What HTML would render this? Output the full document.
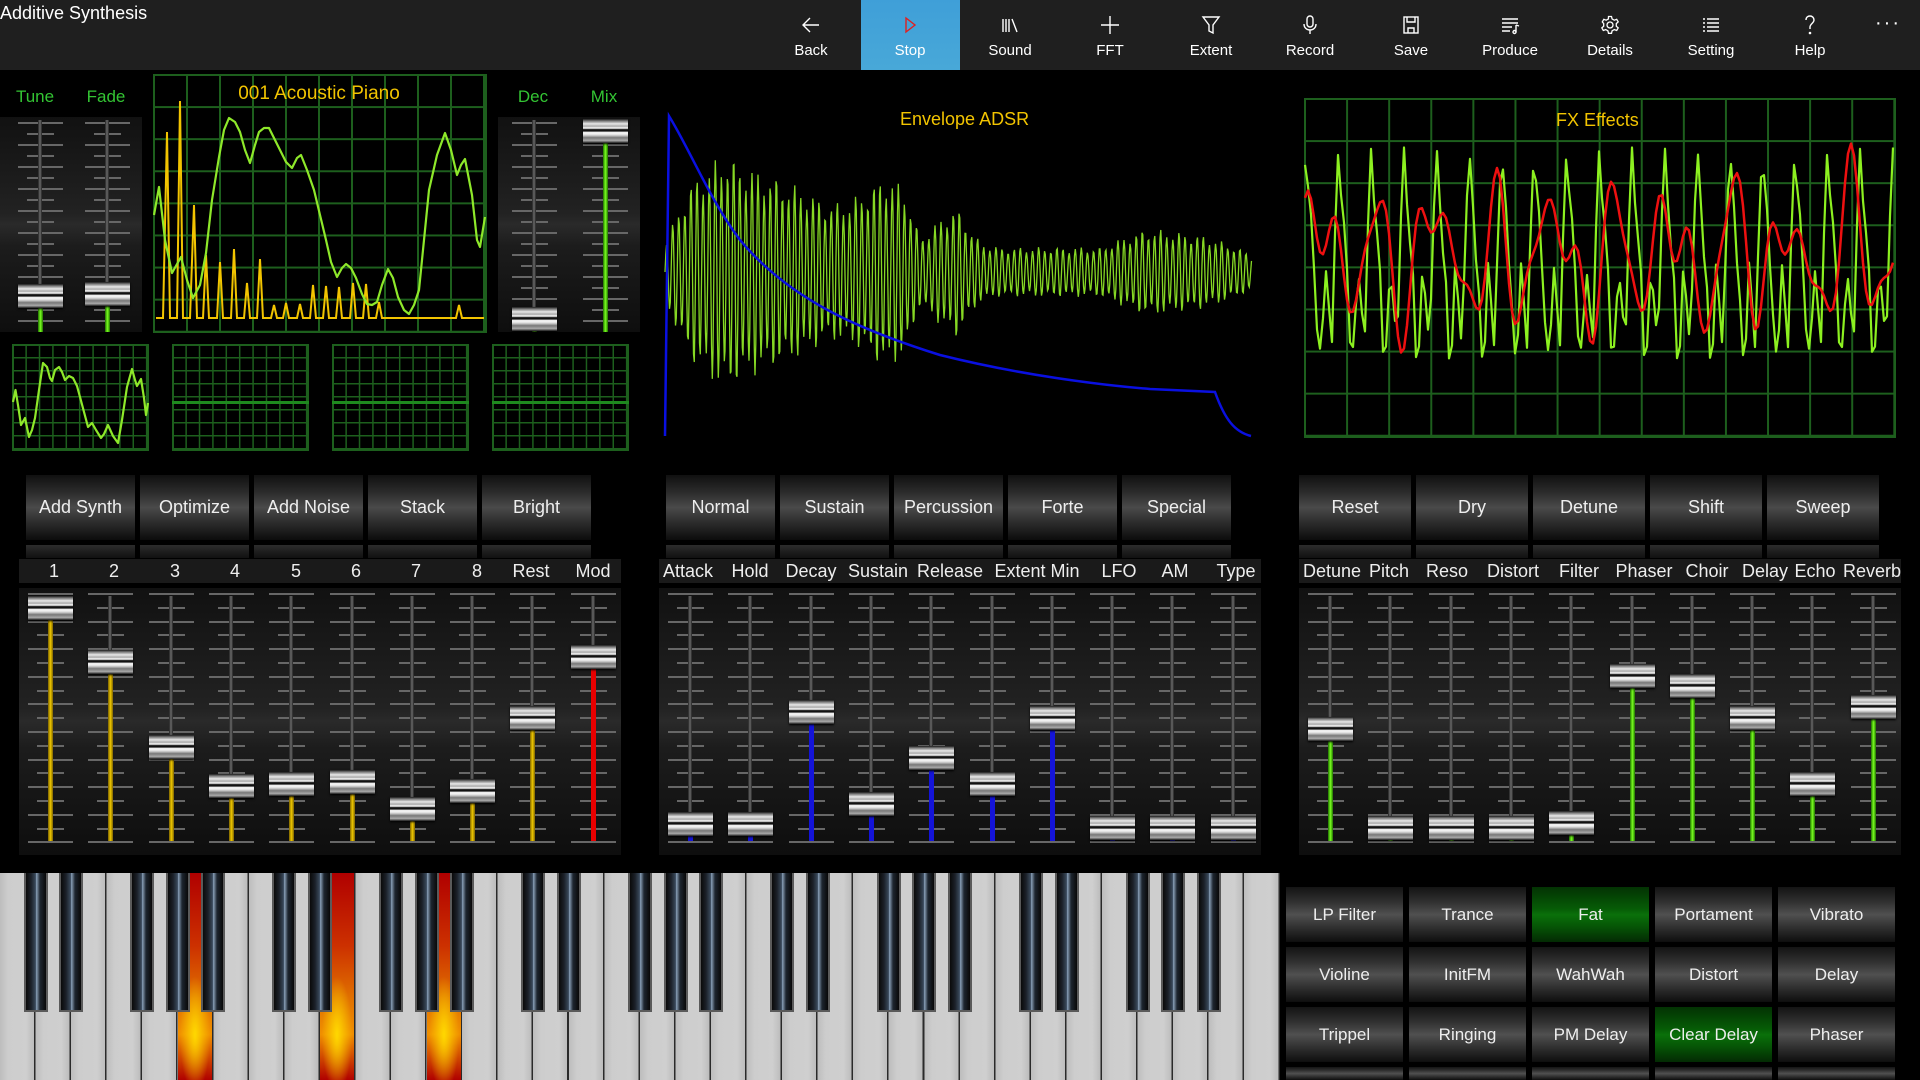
<!DOCTYPE html>
<html><head><meta charset="utf-8">
<style>
*{margin:0;padding:0;box-sizing:border-box}
body{width:1920px;height:1080px;background:#000;overflow:hidden;position:relative;font-family:"Liberation Sans",sans-serif;color:#fff}
.a{position:absolute}
#top{left:0;top:0;width:1920px;height:70px;background:#1f1f1f}
.ti{position:absolute;top:0;width:100px;height:70px;text-align:center;font-size:15px}
.ti svg{position:absolute;left:40px;top:14px}
.ti span{position:absolute;left:0;right:0;top:42px}
.btn{position:absolute;height:65px;background:linear-gradient(180deg,#101010 0%,#2a2a2a 25%,#4a4a4a 50%,#2a2a2a 75%,#0c0c0c 100%);font-size:18px;display:flex;align-items:center;justify-content:center;color:#eee}
.ref{position:absolute;height:13px;top:545px;background:linear-gradient(180deg,#2c2c2c,#111)}
.lbl{position:absolute;top:559px;height:24px;background:#1a1a1a}
.lt{position:absolute;top:559px;font-size:18px;transform:translateX(-50%);white-space:nowrap;color:#eee;line-height:24px}
.panel{position:absolute;background:linear-gradient(180deg,#111 0%,#222 45%,#2a2a2a 50%,#1c1c1c 60%,#0e0e0e 100%)}
.grid{position:absolute;border:2px solid #1d5f1d;background-color:#000}
.bb{position:absolute;width:117px;height:55px;font-size:17px;display:flex;align-items:center;justify-content:center;color:#eee;background:linear-gradient(180deg,#141414 0%,#2e2e2e 25%,#505050 50%,#2e2e2e 75%,#0e0e0e 100%)}
.bb.g{background:linear-gradient(180deg,#033203 0%,#065c06 40%,#0a700a 50%,#065806 70%,#032a03 100%)}
.gl{font-size:17px;color:#33c433;position:absolute;transform:translateX(-50%)}
</style></head><body>
<div id="top" class="a"></div>
<div class="a" style="left:0;top:3px;font-size:18px;color:#fff">Additive Synthesis</div>
<div class="a" style="left:861px;top:0;width:99px;height:70px;background:linear-gradient(180deg,#3f9fd8,#48a8d8)"></div>

<div class="ti" style="left:761px"><svg width="20" height="22" viewBox="0 0 20 22" fill="none" stroke="#fff" stroke-width="1.4"><path d="M18 11H2M9 4L2 11l7 7"/></svg><span>Back</span></div>
<div class="ti" style="left:860px"><svg width="20" height="22" viewBox="0 0 20 22" fill="none" stroke="#e02020" stroke-width="1.4"><path d="M6 4l9 7-9 7z"/></svg><span>Stop</span></div>
<div class="ti" style="left:960px"><svg width="20" height="22" viewBox="0 0 20 22" fill="none" stroke="#fff" stroke-width="1.4"><path d="M3 5v13M6 5v13M9 5v13M12 5l5 13"/></svg><span>Sound</span></div>
<div class="ti" style="left:1060px"><svg width="20" height="22" viewBox="0 0 20 22" fill="none" stroke="#fff" stroke-width="1.4"><path d="M10 2v18M1 11h18"/></svg><span>FFT</span></div>
<div class="ti" style="left:1161px"><svg width="20" height="22" viewBox="0 0 20 22" fill="none" stroke="#fff" stroke-width="1.4"><path d="M2 3h16l-6 8v8l-4-2v-6z"/></svg><span>Extent</span></div>
<div class="ti" style="left:1260px"><svg width="20" height="22" viewBox="0 0 20 22" fill="none" stroke="#fff" stroke-width="1.4"><rect x="7" y="2" width="6" height="11" rx="3"/><path d="M4 10c0 4 3 6 6 6s6-2 6-6M10 16v4"/></svg><span>Record</span></div>
<div class="ti" style="left:1361px"><svg width="20" height="22" viewBox="0 0 20 22" fill="none" stroke="#fff" stroke-width="1.4"><rect x="3" y="3" width="14" height="16"/><path d="M6 3v5h8V3M7 19v-5h6v5"/></svg><span>Save</span></div>
<div class="ti" style="left:1460px"><svg width="20" height="22" viewBox="0 0 20 22" fill="none" stroke="#fff" stroke-width="1.4"><path d="M2 5h16M2 9h16M2 13h10M2 17h8M16 11v7M16 11l3 1"/><circle cx="14.5" cy="18" r="1.5"/></svg><span>Produce</span></div>
<div class="ti" style="left:1560px"><svg width="20" height="22" viewBox="0 0 20 22" fill="none" stroke="#fff" stroke-width="1.3"><circle cx="10" cy="11" r="3"/><path d="M8.5 2.5h3l.6 2.5 2.2 1.2 2.4-.9 1.5 2.6-1.9 1.7v2.6l1.9 1.7-1.5 2.6-2.4-.9-2.2 1.2-.6 2.5h-3l-.6-2.5-2.2-1.2-2.4.9-1.5-2.6 1.9-1.7V9.6L2.3 7.9l1.5-2.6 2.4.9L8.4 5z"/></svg><span>Details</span></div>
<div class="ti" style="left:1661px"><svg width="20" height="22" viewBox="0 0 20 22" fill="none" stroke="#fff" stroke-width="1.4"><path d="M2 5h2M2 9h2M2 13h2M2 17h2M6 5h12M6 9h12M6 13h12M6 17h12"/></svg><span>Setting</span></div>
<div class="ti" style="left:1760px"><svg width="20" height="22" viewBox="0 0 20 22" fill="none" stroke="#fff" stroke-width="1.4"><path d="M6 6c0-3 2-4 4-4s4 1.5 4 4c0 3-4 4-4 7v2"/><circle cx="10" cy="19" r=".6" fill="#fff"/></svg><span>Help</span></div>
<div class="a" style="left:1875px;top:12px;font-size:20px;letter-spacing:2px">···</div>

<div class="panel" style="left:0;top:117px;width:142px;height:215px"></div>
<div class="panel" style="left:498px;top:117px;width:142px;height:215px"></div>
<div class="gl" style="left:35px;top:87px">Tune</div>
<div class="gl" style="left:106px;top:87px">Fade</div>
<div class="gl" style="left:533px;top:87px">Dec</div>
<div class="gl" style="left:604px;top:87px">Mix</div>

<div class="grid" style="left:153px;top:74px;width:334px;height:259px;background-image:linear-gradient(#1d5f1d 2px,transparent 2px),linear-gradient(90deg,#1d5f1d 2px,transparent 2px);background-size:33px 32.1px;background-position:-2px -2px"></div>
<svg class="a" style="left:0;top:0" width="640" height="460" viewBox="0 0 640 460">
<path fill="none" stroke="#f2c400" stroke-width="2" d="M156 318 L163 318 L167 132 L170 318 L177 318 L180 101 L183 318 L190 318 L194 205 L197 318 L203 318 L206 255 L209 318 L217 318 L220 262 L223 318 L231 318 L234 249 L237 318 L244 318 L247 283 L250 318 L257 318 L260 259 L263 318 L271 318 L274 305 L277 318 L283 318 L286 303 L289 318 L297 318 L300 304 L303 318 L310 318 L313 285 L316 318 L323 318 L326 286 L329 318 L336 318 L339 287 L342 318 L350 318 L353 283 L356 318 L363 318 L366 284 L369 318 L376 318 L379 302 L382 318 L456 318 L459 305 L462 318 L484 318"/>
<polyline fill="none" stroke="#8ee82a" stroke-width="2.2" stroke-linejoin="round" points="154,215 159,187 165,240 172,273 181,257 187,280 193,298 200,285 206,253 212,200 219,157 224,130 229,118 235,122 240,132 245,150 250,163 255,145 259,132 264,128 269,128 274,138 280,150 286,162 292,168 297,158 301,155 307,170 314,190 320,215 326,240 331,262 337,277 342,268 346,264 351,268 356,278 362,294 367,304 372,305 377,302 382,285 388,269 393,278 398,297 404,310 409,314 414,305 419,290 424,240 429,190 437,155 445,133 451,150 457,175 461,165 465,159 472,195 477,240 480,247 485,217"/>
</svg>
<div class="a" style="left:319px;top:83px;transform:translateX(-50%);font-size:19px;color:#f2c400;white-space:nowrap">001 Acoustic Piano</div>

<div class="grid" style="left:12px;top:344px;width:137px;height:107px;background-image:linear-gradient(#1d5f1d 1.5px,transparent 1.5px),linear-gradient(90deg,#1d5f1d 1.5px,transparent 1.5px);background-size:13.4px 13px;background-position:-2px -2px"></div>
<div class="grid" style="left:172px;top:344px;width:137px;height:107px;background-image:linear-gradient(#1d5f1d 1.5px,transparent 1.5px),linear-gradient(90deg,#1d5f1d 1.5px,transparent 1.5px);background-size:13.4px 13px;background-position:-2px -2px"></div>
<div class="grid" style="left:332px;top:344px;width:137px;height:107px;background-image:linear-gradient(#1d5f1d 1.5px,transparent 1.5px),linear-gradient(90deg,#1d5f1d 1.5px,transparent 1.5px);background-size:13.4px 13px;background-position:-2px -2px"></div>
<div class="grid" style="left:492px;top:344px;width:137px;height:107px;background-image:linear-gradient(#1d5f1d 1.5px,transparent 1.5px),linear-gradient(90deg,#1d5f1d 1.5px,transparent 1.5px);background-size:13.4px 13px;background-position:-2px -2px"></div>
<div class="a" style="left:172px;top:401px;width:137px;height:3px;background:#1e8a1e"></div>
<div class="a" style="left:332px;top:401px;width:137px;height:3px;background:#1e8a1e"></div>
<div class="a" style="left:492px;top:401px;width:137px;height:3px;background:#1e8a1e"></div>
<svg class="a" style="left:0;top:0" width="160" height="460">
<polyline fill="none" stroke="#8ee82a" stroke-width="2.2" stroke-linejoin="round" points="13,402 15.5,390 18,405 21,425 25,418 29,437 32,430 35,418 39,390 43,363 47,367 50,378 52,381 55,370 59,367 62,372 65,380 69,376 73,378 77,386 80,397 84,412 88,427 92,423 96,430 101,438 104,434 108,425 113,436 118,443 122,420 127,387 132,369 135,380 137,386 141,379 144,398 146,415 148,403"/>
</svg>

<div class="a" style="left:900px;top:109px;font-size:18px;color:#f2c400">Envelope ADSR</div>
<svg class="a" style="left:0;top:0" width="1280" height="460">
<path id="envg" fill="none" stroke="#86d824" stroke-width="1.3"/>
<path fill="none" stroke="#0a10e0" stroke-width="2.5" d="M665 436 L669 116 C690 150 710 200 740 240 C790 300 860 330 940 355 C1020 375 1100 385 1150 389 L1215 392 C1225 420 1235 432 1251 436"/>
</svg>

<div class="grid" style="left:1304px;top:98px;width:592px;height:340px;background-image:linear-gradient(#1d5f1d 2px,transparent 2px),linear-gradient(90deg,#1d5f1d 2px,transparent 2px);background-size:42.1px 42.1px;background-position:-2px -2px"></div>
<div class="a" style="left:1556px;top:110px;font-size:18px;color:#f2c400">FX Effects</div>
<svg class="a" style="left:0;top:0" width="1920" height="460">
<path id="fxg" fill="none" stroke="#8cf020" stroke-width="2.2" stroke-linejoin="round"/>
<path id="fxr" fill="none" stroke="#ee1010" stroke-width="2.5" stroke-linejoin="round"/>
</svg>

<div class="btn" style="left:26px;top:475px;width:109px">Add Synth</div>
<div class="btn" style="left:140px;top:475px;width:109px">Optimize</div>
<div class="btn" style="left:254px;top:475px;width:109px">Add Noise</div>
<div class="btn" style="left:368px;top:475px;width:109px">Stack</div>
<div class="btn" style="left:482px;top:475px;width:109px">Bright</div>
<div class="ref" style="left:26px;width:109px"></div><div class="ref" style="left:140px;width:109px"></div><div class="ref" style="left:254px;width:109px"></div><div class="ref" style="left:368px;width:109px"></div><div class="ref" style="left:482px;width:109px"></div>
<div class="btn" style="left:666px;top:475px;width:109px">Normal</div>
<div class="btn" style="left:780px;top:475px;width:109px">Sustain</div>
<div class="btn" style="left:894px;top:475px;width:109px">Percussion</div>
<div class="btn" style="left:1008px;top:475px;width:109px">Forte</div>
<div class="btn" style="left:1122px;top:475px;width:109px">Special</div>
<div class="ref" style="left:666px;width:109px"></div><div class="ref" style="left:780px;width:109px"></div><div class="ref" style="left:894px;width:109px"></div><div class="ref" style="left:1008px;width:109px"></div><div class="ref" style="left:1122px;width:109px"></div>
<div class="btn" style="left:1299px;top:475px;width:112px">Reset</div>
<div class="btn" style="left:1416px;top:475px;width:112px">Dry</div>
<div class="btn" style="left:1533px;top:475px;width:112px">Detune</div>
<div class="btn" style="left:1650px;top:475px;width:112px">Shift</div>
<div class="btn" style="left:1767px;top:475px;width:112px">Sweep</div>
<div class="ref" style="left:1299px;width:112px"></div><div class="ref" style="left:1416px;width:112px"></div><div class="ref" style="left:1533px;width:112px"></div><div class="ref" style="left:1650px;width:112px"></div><div class="ref" style="left:1767px;width:112px"></div>

<div class="lbl" style="left:19px;width:602px"></div>
<div class="lbl" style="left:659px;width:602px"></div>
<div class="lbl" style="left:1299px;width:602px"></div>
<div class="lt" style="left:54px">1</div><div class="lt" style="left:114px">2</div><div class="lt" style="left:175px">3</div><div class="lt" style="left:235px">4</div><div class="lt" style="left:296px">5</div><div class="lt" style="left:356px">6</div><div class="lt" style="left:416px">7</div><div class="lt" style="left:477px">8</div><div class="lt" style="left:531px">Rest</div><div class="lt" style="left:593px">Mod</div>
<div class="lt" style="left:688px">Attack</div><div class="lt" style="left:750px">Hold</div><div class="lt" style="left:811px">Decay</div><div class="lt" style="left:878px">Sustain</div><div class="lt" style="left:950px">Release</div><div class="lt" style="left:1037px">Extent Min</div><div class="lt" style="left:1119px">LFO</div><div class="lt" style="left:1175px">AM</div><div class="lt" style="left:1236px">Type</div>
<div class="lt" style="left:1332px">Detune</div><div class="lt" style="left:1389px">Pitch</div><div class="lt" style="left:1447px">Reso</div><div class="lt" style="left:1513px">Distort</div><div class="lt" style="left:1579px">Filter</div><div class="lt" style="left:1644px">Phaser</div><div class="lt" style="left:1707px">Choir</div><div class="lt" style="left:1765px">Delay</div><div class="lt" style="left:1815px">Echo</div><div class="lt" style="left:1872px">Reverb</div>

<div class="panel" style="left:19px;top:588px;width:602px;height:267px"></div>
<div class="panel" style="left:659px;top:588px;width:602px;height:267px"></div>
<div class="panel" style="left:1299px;top:588px;width:602px;height:267px"></div>

<div id="F" class="a" style="left:0;top:0;width:1920px;height:1080px"></div>

<div id="P" class="a" style="left:0;top:873px;width:1280px;height:207px;background:repeating-linear-gradient(90deg,#bdbdbd 0,#cdcdcd 8px,#cfcfcf 26px,#bcbcbc 34px,#2a2a2a 34px,#2a2a2a 35.55px);overflow:hidden"></div>

<div class="bb" style="left:1286px;top:887px">LP Filter</div><div class="bb" style="left:1409px;top:887px">Trance</div><div class="bb g" style="left:1532px;top:887px">Fat</div><div class="bb" style="left:1655px;top:887px">Portament</div><div class="bb" style="left:1778px;top:887px">Vibrato</div>
<div class="bb" style="left:1286px;top:947px">Violine</div><div class="bb" style="left:1409px;top:947px">InitFM</div><div class="bb" style="left:1532px;top:947px">WahWah</div><div class="bb" style="left:1655px;top:947px">Distort</div><div class="bb" style="left:1778px;top:947px">Delay</div>
<div class="bb" style="left:1286px;top:1007px">Trippel</div><div class="bb" style="left:1409px;top:1007px">Ringing</div><div class="bb" style="left:1532px;top:1007px">PM Delay</div><div class="bb g" style="left:1655px;top:1007px">Clear Delay</div><div class="bb" style="left:1778px;top:1007px">Phaser</div>
<div class="bb" style="left:1286px;top:1067px;height:13px"></div><div class="bb" style="left:1409px;top:1067px;height:13px"></div><div class="bb" style="left:1532px;top:1067px;height:13px"></div><div class="bb" style="left:1655px;top:1067px;height:13px"></div><div class="bb" style="left:1778px;top:1067px;height:13px"></div>

<script>
const F=document.getElementById('F');
function el(css,p){const d=document.createElement('div');d.style.cssText='position:absolute;'+css;(p||F).appendChild(d);return d;}
const TH='linear-gradient(180deg,#1a1a1a 0,#777 8%,#e8e8e8 20%,#aaa 30%,#fff 38%,#111 44%,#111 50%,#fff 56%,#ddd 66%,#777 78%,#aaa 90%,#1a1a1a 100%)';
const COL={y:'linear-gradient(90deg,#7a6200,#f0c800,#7a6200)',b:'#1414d8',g:'linear-gradient(90deg,#1f7000,#7aff20,#1f7000)',r:'#e80000'};
function fader(cx,t0,step,n,tt,tb,v,c){
 for(let k=0;k<n;k++){const y=t0+k*step;el(`left:${cx-22}px;top:${y}px;width:45px;height:2px;background:#676767`);
  if(k<n-1)el(`left:${cx-13}px;top:${y+step/2}px;width:27px;height:2px;background:#676767`);}
 el(`left:${cx-2}px;top:${tt}px;width:4px;height:${Math.max(0,v-tt)}px;background:linear-gradient(90deg,#222,#6a6a6a,#222)`);
 el(`left:${cx-2}px;top:${v}px;width:5px;height:${tb-v}px;background:${COL[c]}`);
 el(`left:${cx-22}px;top:${v-12}px;width:45px;height:24px;background:${TH};box-shadow:0 1px 2px #000`);
}
fader(40,122,22,10,120,332,296,'g');fader(107,122,22,10,120,332,294,'g');
fader(534,122,22,10,120,332,319,'g');fader(605,122,22,10,120,332,131,'g');
const L=[608,662,747,786,784,782,809,791,718,657],M=[824,824,712,804,758,784,718,828,828,828],R=[729,828,828,828,823,676,686,718,784,707];
for(let i=0;i<10;i++){
 fader(50+i*60.3,593,27.6,10,596,841,L[i],i==9?'r':'y');
 fader(690+i*60.3,593,27.6,10,596,841,M[i],'b');
 fader(1330+i*60.3,593,27.6,10,596,841,R[i],'g');
}
const P=document.getElementById('P'),w=1280/36;
[5,9,12].forEach(i=>el(`left:${i*w}px;top:0;width:${w-1.5}px;height:207px;background:radial-gradient(ellipse 45% 28% at 50% 78%,#ffd800,rgba(255,160,0,0) 100%),linear-gradient(180deg,#b00000 0%,#cc3000 35%,#e07000 60%,#f09000 78%,#b00000 100%)`,P));
for(let o=0;o<6;o++)[1,2,4,5,6].forEach(b=>{const x=(o*7+b)*w;if(x<1280)el(`left:${x-12}px;top:0;width:24px;height:139px;background:linear-gradient(90deg,#0a0a0a 0,#1b2028 25%,#3a4a5c 48%,#8aa0b8 52%,#1e2630 70%,#080808 100%);border:2px solid #5a5a5a;border-top:none`,P);});
const prof=[[665,30],[690,90],[726,122],[750,105],[780,95],[800,85],[830,70],[850,72],[885,98],[905,85],[920,35],[956,67],[980,30],[1000,25],[1100,25],[1146,44],[1200,38],[1230,28],[1252,18]];
function ip(x){for(let i=0;i<prof.length-1;i++){const a=prof[i],b=prof[i+1];if(x>=a[0]&&x<=b[0])return a[1]+(b[1]-a[1])*(x-a[0])/(b[0]-a[0]);}return 15;}
let d='';for(let x=665;x<=1252;x+=0.75){const y=272-ip(x)*(0.88+0.12*Math.sin(x*0.31))*Math.sin((x-665)/6.1*2*Math.PI);d+=(x==665?'M':'L')+x.toFixed(1)+' '+y.toFixed(1);}
document.getElementById('envg').setAttribute('d',d);
let g='',r='';for(let x=1305;x<=1895;x+=3){const p=(x-1305)/32.6*2*Math.PI;
 const gv=0.5*Math.sin(p+1.2)+0.3*Math.sin(2*p+0.4)+0.2*Math.sin(3*p+2)+0.08*Math.sin(7*p);
 const rv=0.45*Math.sin(p*0.55+0.3)+0.3*Math.sin(p*0.83+2.2)+0.2*Math.sin(p*1.2+1)+0.12*Math.sin(p*0.31);
 g+=(x==1305?'M':'L')+x+' '+(272-gv*140).toFixed(1);r+=(x==1305?'M':'L')+x+' '+(255-rv*105).toFixed(1);}
document.getElementById('fxg').setAttribute('d',g);document.getElementById('fxr').setAttribute('d',r);
</script>
</body></html>
